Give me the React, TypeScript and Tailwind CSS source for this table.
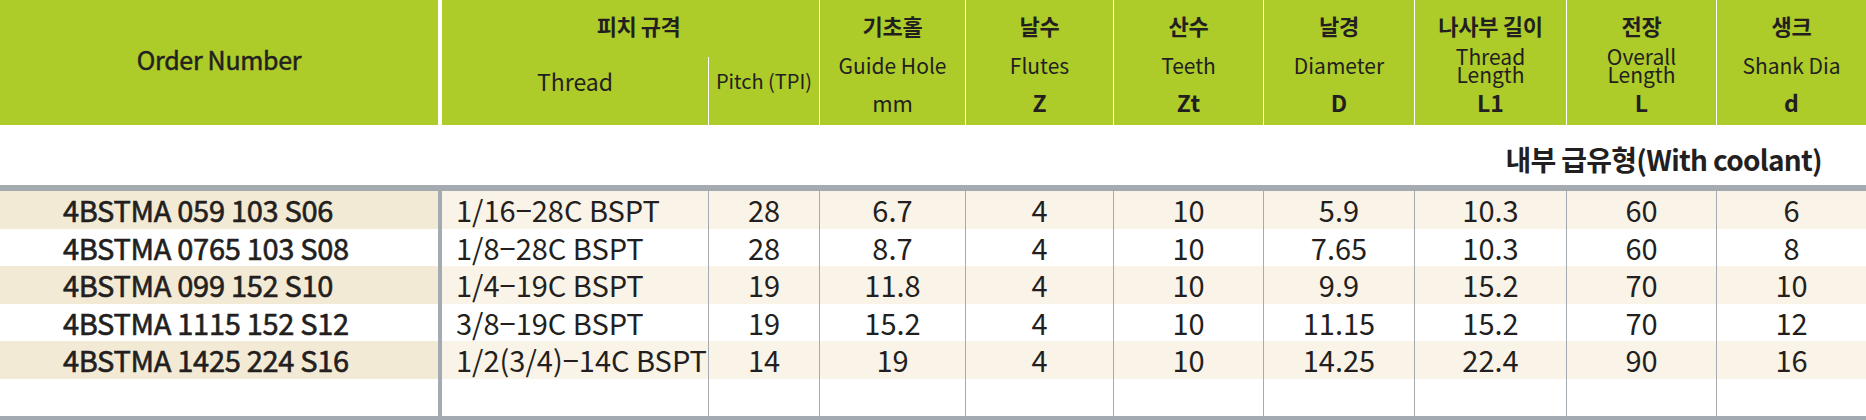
import React from "react";

const grid =
  "grid grid-cols-[438px_270px_111px_146px_148px_150px_151px_152px_150px_150px]";

const rows: string[][] = [
  ["4BSTMA 059 103 S06", "1/16−28C BSPT", "28", "6.7", "4", "10", "5.9", "10.3", "60", "6"],
  ["4BSTMA 0765 103 S08", "1/8−28C BSPT", "28", "8.7", "4", "10", "7.65", "10.3", "60", "8"],
  ["4BSTMA 099 152 S10", "1/4−19C BSPT", "19", "11.8", "4", "10", "9.9", "15.2", "70", "10"],
  ["4BSTMA 1115 152 S12", "3/8−19C BSPT", "19", "15.2", "4", "10", "11.15", "15.2", "70", "12"],
  ["4BSTMA 1425 224 S16", "1/2(3/4)−14C BSPT", "14", "19", "4", "10", "14.25", "22.4", "90", "16"],
  ["", "", "", "", "", "", "", "", "", ""],
];

type Head = { ko: string; en: string[]; sym: string; bold?: boolean };

const heads: Head[] = [
  { ko: "기초홀", en: ["Guide Hole"], sym: "mm" },
  { ko: "날수", en: ["Flutes"], sym: "Z", bold: true },
  { ko: "산수", en: ["Teeth"], sym: "Zt", bold: true },
  { ko: "날경", en: ["Diameter"], sym: "D", bold: true },
  { ko: "나사부 길이", en: ["Thread", "Length"], sym: "L1", bold: true },
  { ko: "전장", en: ["Overall", "Length"], sym: "L", bold: true },
  { ko: "생크", en: ["Shank Dia"], sym: "d", bold: true },
];

function HeadCell({ h }: { h: Head }) {
  return (
    <div className="flex flex-col items-center border-l border-white">
      <div className="flex h-[48px] items-center pt-[2px] text-[22px] font-bold tracking-[-0.3px]">
        {h.ko}
      </div>
      <div className="flex h-[34px] flex-col items-center justify-center text-[21px] leading-[18px]">
        {h.en.map((t) => (
          <span key={t}>{t}</span>
        ))}
      </div>
      <div
        className={
          h.bold
            ? "flex h-[40px] items-center text-[23px] font-bold"
            : "flex h-[40px] items-center text-[22px]"
        }
      >
        {h.sym}
      </div>
    </div>
  );
}

export default function App() {
  return (
    <div className="w-[1866px] h-[420px] bg-white text-[#231f20] font-['Noto_Sans_CJK_KR',sans-serif] overflow-hidden">
      {/* header */}
      <div className={`${grid} h-[125px] bg-[#adcb29]`}>
        <div className="flex items-center justify-center pb-[5px] text-[25px] tracking-[-0.3px] [-webkit-text-stroke:0.5px_#231f20]">
          Order Number
        </div>
        <div className="col-span-2 flex flex-col border-l-4 border-white">
          <div className="flex h-[57px] items-center justify-center pb-[7px] pl-[16px] text-[22px] font-bold tracking-[-0.5px]">
            피치 규격
          </div>
          <div className="flex flex-1">
            <div className="flex h-[48px] w-[266px] items-center justify-center text-[23px]">
              Thread
            </div>
            <div className="flex w-[111px] border-l border-white">
              <div className="flex h-[48px] w-full items-center justify-center text-[20px]">
                Pitch (TPI)
              </div>
            </div>
          </div>
        </div>
        {heads.map((h) => (
          <HeadCell key={h.ko} h={h} />
        ))}
      </div>

      {/* caption */}
      <div className="flex h-[60px] items-center justify-end pr-[44px] pt-[8px] text-[28px] font-bold tracking-[-0.7px]">
        내부 급유형(With coolant)
      </div>

      <div className="h-[6px] bg-[#a3aab0]" />

      {/* body */}
      {rows.map((r, i) => {
        const shade = i % 2 === 0 && i < 5;
        return (
          <div key={i} className={`${grid} h-[37.5px] text-[29px] leading-none`}>
            <div
              className={`flex items-center pl-[63px] tracking-[-0.3px] [-webkit-text-stroke:0.6px_#231f20] ${
                shade ? "bg-[#f3ead5]" : "bg-white"
              }`}
            >
              {r[0]}
            </div>
            {r.slice(1).map((v, j) => (
              <div
                key={j}
                className={`flex items-center border-[#a3aab0] ${
                  j === 0 ? "border-l-4 pl-[14px]" : "border-l justify-center"
                } ${shade ? "bg-[#faf3e8]" : "bg-white"}`}
              >
                {v}
              </div>
            ))}
          </div>
        );
      })}

      <div className="h-[4px] bg-[#a3aab0]" />
    </div>
  );
}
